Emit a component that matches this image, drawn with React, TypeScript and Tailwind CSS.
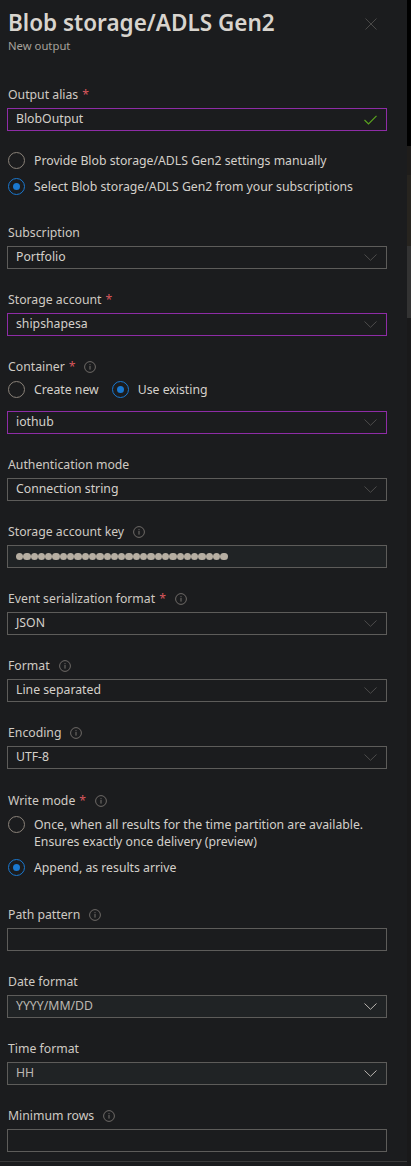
import React from "react";

const Info = () => (
  <svg width="12" height="12" viewBox="0 0 12 12" className="ml-[9px] shrink-0">
    <circle cx="6" cy="6" r="5.4" fill="none" stroke="#77736f" strokeWidth="0.9" />
    <rect x="5.5" y="5" width="1" height="3.6" fill="#77736f" />
    <rect x="5.5" y="3.2" width="1" height="1" fill="#77736f" />
  </svg>
);

const Chevron = ({ bright }: { bright?: boolean }) => (
  <svg width="13" height="7" viewBox="0 0 13 7" className="shrink-0">
    <path d="M0.5 0.5 L6.5 6.3 L12.5 0.5" fill="none" stroke={bright ? "#b9b5b0" : "#4d4c4b"} strokeWidth="1" />
  </svg>
);

const Label = ({ text, required, info }: { text: string; required?: boolean; info?: boolean }) => (
  <div className="flex items-center h-[18px] text-[12.25px] text-[#cfcac3] pl-px">
    <span>{text}</span>
    {required && <span className="ml-[4px] text-[#d9575c]">*</span>}
    {info && <Info />}
  </div>
);

const Box = ({
  children,
  accent,
  filled,
  className = "",
}: {
  children?: React.ReactNode;
  accent?: boolean;
  filled?: boolean;
  className?: string;
}) => (
  <div
    className={`flex items-center h-[23px] pl-[8px] pr-[9px] border text-[12.25px] text-[#d4d0ca] ${
      accent ? "border-[#8e2ca6]" : "border-[#5d5c5a]"
    } ${filled ? "bg-[#202325]" : "bg-[#1b1c1e]"} ${className}`}
  >
    {children}
  </div>
);

const Select = ({ value, accent, filled, bright }: { value: string; accent?: boolean; filled?: boolean; bright?: boolean }) => (
  <Box accent={accent} filled={filled} className="mt-[4px]">
    <span className={`flex-1 ${bright ? "text-[#bdb8b2]" : ""}`}>{value}</span>
    <Chevron bright={bright} />
  </Box>
);

const Radio = ({ checked }: { checked?: boolean }) => (
  <span
    className={`flex items-center justify-center w-[17px] h-[17px] rounded-full border shrink-0 ${
      checked ? "border-[#1a78cf]" : "border-[#8a8279]"
    }`}
  >
    {checked && <span className="w-[7px] h-[7px] rounded-full bg-[#1a78cf]" />}
  </span>
);

const RadioRow = ({ checked, children, className = "" }: { checked?: boolean; children: React.ReactNode; className?: string }) => (
  <div className={`flex items-start gap-[9px] pl-px text-[12.25px] leading-[17px] text-[#d4d0ca] ${className}`}>
    <Radio checked={checked} />
    <span>{children}</span>
  </div>
);

export default function App() {
  return (
    <div className="flex w-[411px] h-[1166px] bg-[#1b1c1e] overflow-hidden font-['Noto_Sans',sans-serif]">
      <div className="flex flex-col w-[407px] h-full">
        <div className="flex-1 pl-[7px] pr-[20px]">
          <div className="flex items-center justify-between pt-[8px] h-[38px]">
            <h1 className="text-[22.5px] leading-[30px] font-semibold text-[#d8d4ce] pl-px">Blob storage/ADLS Gen2</h1>
            <svg width="12" height="12" viewBox="0 0 12 12" className="mr-[10px] mt-[2px]">
              <path d="M0.5 0.5 L11.5 11.5 M11.5 0.5 L0.5 11.5" stroke="#4a4948" strokeWidth="1" />
            </svg>
          </div>
          <div className="text-[11.3px] leading-[16px] text-[#a6a19b] pl-px">New output</div>

          <div className="mt-[32px]">
            <Label text="Output alias" required />
            <Box accent className="mt-[4px]">
              <span className="flex-1">BlobOutput</span>
              <svg width="13" height="10" viewBox="0 0 13 10">
                <path d="M0.5 5 L4.5 9 L12.5 0.8" fill="none" stroke="#5aa31f" strokeWidth="1.2" />
              </svg>
            </Box>
          </div>

          <div className="mt-[21px] flex flex-col gap-[9px]">
            <RadioRow>Provide Blob storage/ADLS Gen2 settings manually</RadioRow>
            <RadioRow checked>Select Blob storage/ADLS Gen2 from your subscriptions</RadioRow>
          </div>

          <div className="mt-[29px]">
            <Label text="Subscription" />
            <Select value="Portfolio" />
          </div>

          <div className="mt-[22px]">
            <Label text="Storage account" required />
            <Select value="shipshapesa" accent />
          </div>

          <div className="mt-[22px]">
            <Label text="Container" required info />
            <div className="flex items-center mt-[3px] h-[20px]">
              <RadioRow>Create new</RadioRow>
              <RadioRow checked className="ml-[12px]">Use existing</RadioRow>
            </div>
            <Box accent className="mt-[12px]">
              <span className="flex-1">iothub</span>
              <Chevron />
            </Box>
          </div>

          <div className="mt-[22px]">
            <Label text="Authentication mode" />
            <Select value="Connection string" />
          </div>

          <div className="mt-[22px]">
            <Label text="Storage account key" info />
            <Box filled className="mt-[4px]">
              <div className="flex">
                {Array.from({ length: 29 }).map((_, i) => (
                  <span key={i} className="w-[7.3px] h-[7.3px] rounded-full bg-[#b6aea2]" />
                ))}
              </div>
            </Box>
          </div>

          <div className="mt-[22px]">
            <Label text="Event serialization format" required info />
            <Select value="JSON" />
          </div>

          <div className="mt-[22px]">
            <Label text="Format" info />
            <Select value="Line separated" />
          </div>

          <div className="mt-[22px]">
            <Label text="Encoding" info />
            <Select value="UTF-8" />
          </div>

          <div className="mt-[23px]">
            <Label text="Write mode" required info />
            <div className="mt-[6px] flex flex-col gap-[9px]">
              <RadioRow>
                Once, when all results for the time partition are available.
                <br />
                Ensures exactly once delivery (preview)
              </RadioRow>
              <RadioRow checked>Append, as results arrive</RadioRow>
            </div>
          </div>

          <div className="mt-[30px]">
            <Label text="Path pattern" info />
            <Box className="mt-[4px]" />
          </div>

          <div className="mt-[22px]">
            <Label text="Date format" />
            <Select value="YYYY/MM/DD" filled bright />
          </div>

          <div className="mt-[22px]">
            <Label text="Time format" />
            <Select value="HH" filled bright />
          </div>

          <div className="mt-[22px]">
            <Label text="Minimum rows" info />
            <Box className="mt-[4px]" />
          </div>
        </div>
        <div className="h-px bg-[#3a3a3a] mb-[4px]" />
      </div>
      <div className="flex flex-col w-[4px] h-full bg-[#19191a]">
        <div className="h-[146px] bg-black" />
        <div className="h-[29px] bg-[#1f1d1b]" />
        <div className="h-[71px] bg-[#27241f]" />
        <div className="h-[72px] bg-[#333333]" />
      </div>
    </div>
  );
}
